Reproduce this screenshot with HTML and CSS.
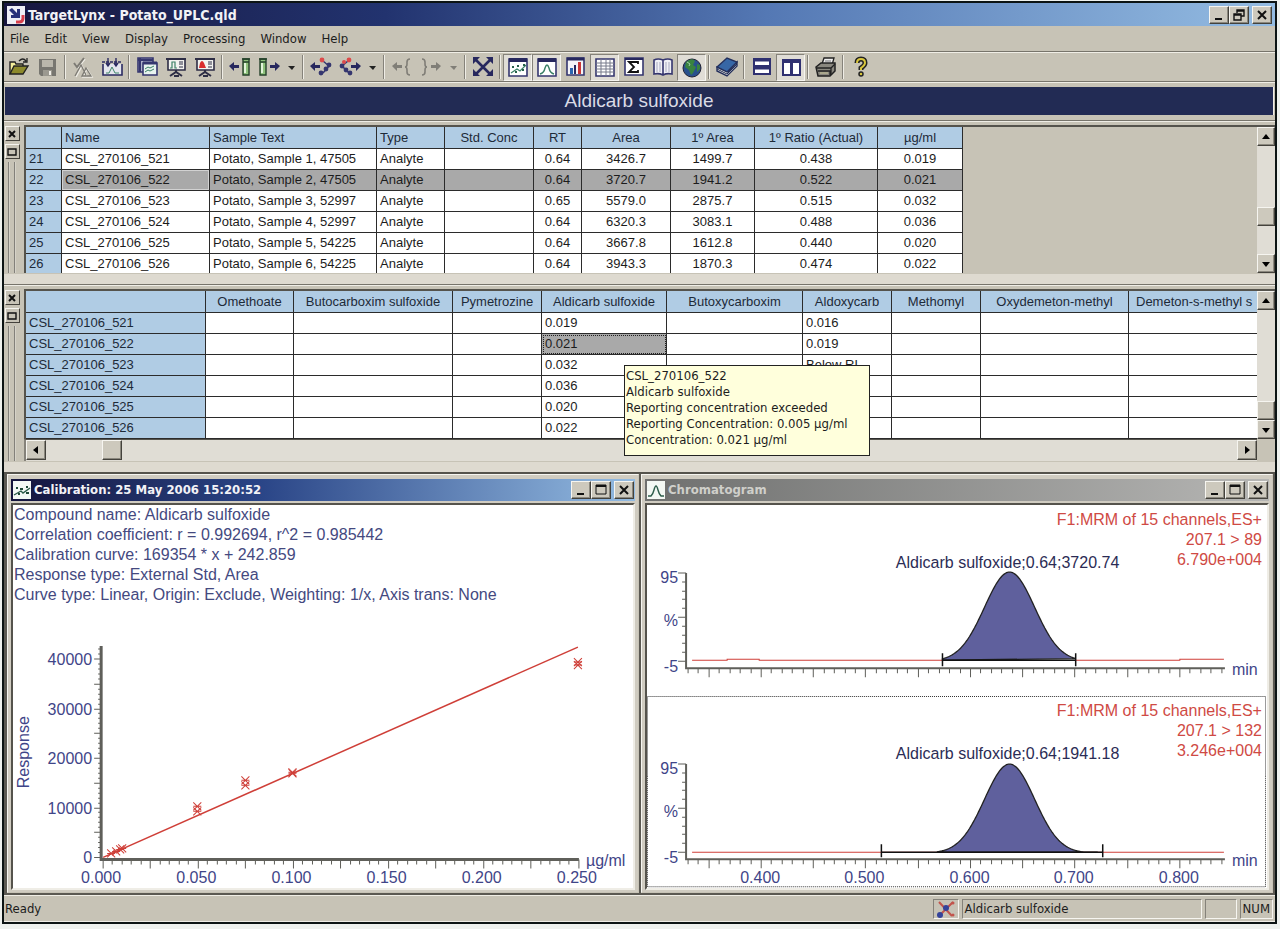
FILE: index.html
```html
<!DOCTYPE html>
<html lang="en">
<head>
  <meta charset="UTF-8" />
  <meta name="viewport" content="width=device-width, initial-scale=1.0"/>
  <title>TargetLynx - Potato_UPLC.qld</title>
  <link rel="stylesheet" href="styles.css">
</head>

<body>
  <div class="app">
    <header class="titlebar">
      <svg class="app-icon" viewBox="0 0 18 18"><rect width="18" height="18" fill="#eef0f6"/><path d="M2 4l3-2 5 5V3h3v9H4V9h3z" fill="#27327a"/><path d="M16 9v3q0 4-4 4H9" fill="none" stroke="#d8404c" stroke-width="3"/></svg>
      <h1>TargetLynx - Potato_UPLC.qld</h1>
      <div class="win-buttons">
        <button aria-label="Minimize"><svg viewBox="0 0 12 12"><path d="M2 10h7" stroke="#111" stroke-width="2"/></svg></button>
        <button aria-label="Restore"><svg viewBox="0 0 12 12" fill="none" stroke="#111"><path d="M4 4V1h7v6H8M4 2h7M1 5h7v6H1zM1 6h7" stroke-width="1.4"/></svg></button>
        <button class="close" aria-label="Close"><svg viewBox="0 0 12 12"><path d="M2 2l8 8M10 2l-8 8" stroke="#111" stroke-width="2"/></svg></button>
      </div>
    </header>

    <nav class="menubar">
      <button>File</button>
      <button>Edit</button>
      <button>View</button>
      <button>Display</button>
      <button>Processing</button>
      <button>Window</button>
      <button>Help</button>
    </nav>

    <div class="toolbar">
      <button aria-label="Open"><svg viewBox="0 0 22 22"><path d="M2 18V6h5l1 2h7v3" fill="#f4ee9a" stroke="#222" stroke-width="1.4"/><path d="M2 18l4-8h14l-5 8z" fill="#8d8a2c" stroke="#222" stroke-width="1.4"/><path d="M11 5q4-4 7 0M19 2v4h-4" fill="none" stroke="#222" stroke-width="1.3"/></svg></button>
      <button aria-label="Save"><svg viewBox="0 0 22 22"><path d="M2 3h17v17H4l-2-2z" fill="#777670"/><path d="M5 4h11v7H5z" fill="#b9b6ab"/><path d="M6 14h9v6H6z" fill="#9b9990"/><path d="M12 15h2v4h-2z" fill="#f0eee8"/></svg></button>
      <span class="sep"></span>
      <button aria-label="Process"><svg viewBox="0 0 22 22" fill="none"><path d="M2 7l3 4 7-9M3 20L9 9l5 10M10 20l4-8 5 8z" stroke="#efede6" stroke-width="1.5" transform="translate(1 1)"/><path d="M2 7l3 4 7-9" stroke="#7d7b74" stroke-width="2"/><path d="M3 20L9 9l5 10M10 20l4-8 5 8z" stroke="#7d7b74" stroke-width="1.3"/></svg></button>
      <button aria-label="Integrate"><svg viewBox="0 0 22 22" fill="none" stroke="#2b2b62"><path d="M2 8v11h19V8" fill="#e4e6ee" stroke-width="1.6"/><path d="M1 6h20" stroke-width="1.4" stroke-dasharray="3 1"/><path d="M7 2v7M15 2v7M5 7l2 3 2-3M13 7l2 3 2-3" stroke-width="1.4"/><path d="M5 17h3l3-6 3 6h4" stroke="#41876a"/></svg></button>
      <span class="sep"></span>
      <button aria-label="Layouts"><svg viewBox="0 0 22 22" fill="none" stroke="#35366f" stroke-width="1.6"><path d="M2 2h15v14H2z" fill="#aeb1ca"/><path d="M2 4h15M4 2v14" stroke-width="2"/><path d="M7 7h14v12H7z" fill="#e8f3ef"/><path d="M7 7h14" stroke-width="3"/><path d="M9 13l3-2 2 1 4-2M9 16l3-2 2 1 4-2" stroke="#3a8066" stroke-width="1"/></svg></button>
      <button aria-label="Method display"><svg viewBox="0 0 22 22" fill="none" stroke="#2d2d45" stroke-width="1.6"><path d="M3 3h17v11H3z" fill="#f2f3ef"/><path d="M1 3h20M11 14v3M5 20l6-4 6 4M9 20h5" stroke-width="2"/><path d="M5 12h2V6h3v6h2" stroke="#3c8266" stroke-width="1.2"/><path d="M14 6h4M14 8h4M14 11h4" stroke-width="1"/></svg></button>
      <button aria-label="Alarm display"><svg viewBox="0 0 22 22" fill="none" stroke="#2d2d45" stroke-width="1.6"><path d="M3 3h17v11H3z" fill="#f2f3ef"/><path d="M1 3h20M11 14v3M5 20l6-4 6 4M9 20h5" stroke-width="2"/><path d="M5 12l1-5q2-4 4 0l2 5z" fill="#d92d2d" stroke="none"/><path d="M14 6h4M14 8h4M14 11h4" stroke-width="1"/></svg></button>
      <span class="sep"></span>
      <button aria-label="Previous sample"><svg viewBox="0 0 22 22"><path d="M0 10l5-4v3h5v3H5v3z" fill="#27285e"/><path d="M14 3h6v16h-6z" fill="#8ec27c" stroke="#24422a" stroke-width="1.4"/><path d="M13 3h8M14 6h6" stroke="#24422a" stroke-width="1.6"/><path d="M16 7v10" stroke="#e2f4da" stroke-width="2"/></svg></button>
      <button aria-label="Next sample"><svg viewBox="0 0 22 22"><path d="M22 10l-5-4v3h-5v3h5v3z" fill="#27285e"/><path d="M2 3h6v16H2z" fill="#8ec27c" stroke="#24422a" stroke-width="1.4"/><path d="M1 3h8M2 6h6" stroke="#24422a" stroke-width="1.6"/><path d="M4 7v10" stroke="#e2f4da" stroke-width="2"/></svg></button>
      <button class="drop" aria-label="Samples"><svg viewBox="0 0 8 22"><path d="M0 10h7l-3 4z" fill="#222"/></svg></button>
      <span class="sep"></span>
      <button aria-label="Previous compound"><svg viewBox="0 0 22 22"><path d="M0 10l5-4v3h5v3H5v3z" fill="#27285e"/><path d="M13 5l6 5-6 7" fill="none" stroke="#35366f" stroke-width="1.5"/><circle cx="12" cy="4" r="2.4" fill="#dc4a4a"/><circle cx="19" cy="9" r="2.4" fill="#35366f"/><circle cx="16" cy="13" r="2.4" fill="#35366f"/><circle cx="11" cy="17" r="2.4" fill="#35366f"/></svg></button>
      <button aria-label="Next compound"><svg viewBox="0 0 22 22"><path d="M22 10l-5-4v3h-5v3h5v3z" fill="#27285e"/><path d="M9 5l-6 5 7 7" fill="none" stroke="#35366f" stroke-width="1.5"/><circle cx="10" cy="4" r="2.4" fill="#dc4a4a"/><circle cx="5" cy="6" r="2" fill="#dc4a4a"/><circle cx="3" cy="10" r="2.4" fill="#35366f"/><circle cx="7" cy="14" r="2.4" fill="#35366f"/><circle cx="11" cy="17" r="2.4" fill="#35366f"/></svg></button>
      <button class="drop" aria-label="Compounds"><svg viewBox="0 0 8 22"><path d="M0 10h7l-3 4z" fill="#222"/></svg></button>
      <span class="sep"></span>
      <button disabled aria-label="Previous group"><svg viewBox="0 0 22 22"><path d="M1 10l5-4v3h5v3H6v3z" fill="#807e77"/><path d="M19 3q-3 0-3 3v2q0 3-2 3 2 0 2 3v2q0 3 3 3" fill="none" stroke="#807e77" stroke-width="1.6"/></svg></button>
      <button disabled aria-label="Next group"><svg viewBox="0 0 22 22"><path d="M21 10l-5-4v3h-5v3h5v3z" fill="#807e77"/><path d="M2 3q3 0 3 3v2q0 3 2 3-2 0-2 3v2q0 3-3 3" fill="none" stroke="#807e77" stroke-width="1.6"/></svg></button>
      <button class="drop" disabled aria-label="Groups"><svg viewBox="0 0 8 22"><path d="M0 10h7l-3 4z" fill="#807e77"/></svg></button>
      <span class="sep"></span>
      <button aria-label="Zoom to fit"><svg viewBox="0 0 22 22"><path d="M4 4l14 14M18 4L4 18" stroke="#27285e" stroke-width="2.6"/><path d="M1 1h7L1 8zM21 1h-7l7 7zM1 20h7l-7-7zM21 20h-7l7-7z" fill="#27285e"/></svg></button>
      <span class="sep"></span>
      <button class="on" aria-label="Calibration"><svg viewBox="0 0 22 22"><path d="M2 3h18v17H2z" fill="#fff" stroke="#35366f" stroke-width="1.6"/><path d="M2 4h18" stroke="#27285e" stroke-width="4"/><path d="M4 17l6-4 3 2 6-6" fill="none" stroke="#3a8066" stroke-width="1.2"/><path d="M5 10h2v2H5zM10 9h2v2h-2zM15 13h2v2h-2zM8 15h2v2H8zM16 8h2v2h-2z" fill="#27604a"/></svg></button>
      <button class="on" aria-label="Chromatogram"><svg viewBox="0 0 22 22"><path d="M2 3h18v17H2z" fill="#fff" stroke="#35366f" stroke-width="1.6"/><path d="M2 4h18" stroke="#27285e" stroke-width="4"/><path d="M4 18q4-1 5-6 2-6 4 0 1 5 5 6" fill="none" stroke="#3a8066" stroke-width="1.4"/></svg></button>
      <button aria-label="Spectrum"><svg viewBox="0 0 22 22"><path d="M2 2h17v17H2z" fill="#f4f4f8" stroke="#35366f" stroke-width="1.6"/><path d="M2 3h17" stroke="#27285e" stroke-width="3"/><path d="M5 12h3v6H5z" fill="#2b66b0"/><path d="M9 9h2v9H9z" fill="#27285e"/><path d="M13 6h3v12h-3z" fill="#c93636"/></svg></button>
      <button class="on" aria-label="Results table"><svg viewBox="0 0 22 22"><path d="M2 3h18v17H2z" fill="#fff" stroke="#35366f" stroke-width="1.6"/><path d="M2 7h18M2 10h18M2 13h18M2 16h18M7 3v17M12 3v17M16 3v17" stroke="#777b8a"/></svg></button>
      <button aria-label="Summary"><svg viewBox="0 0 22 22"><path d="M2 2h18v17H2z" fill="#fff" stroke="#35366f" stroke-width="1.6"/><path d="M2 3h18" stroke="#27285e" stroke-width="2"/><path d="M15 8V6H6l5 5-5 5h9v-2" fill="none" stroke="#111" stroke-width="1.8"/></svg></button>
      <button aria-label="Audit"><svg viewBox="0 0 22 22"><path d="M2 4q4-2 9 0 5-2 9 0v14q-5-1-9 1-4-2-9-1zM11 4v15" fill="#f1f1f6" stroke="#35366f" stroke-width="1.6"/><path d="M5 6v10M8 6v10M14 6v10M17 6v10" stroke="#a7a9c0"/></svg></button>
      <button class="on" aria-label="Globe"><svg viewBox="0 0 22 22"><circle cx="11" cy="12" r="9" fill="#28508c" stroke="#223"/><path d="M5 6q6-5 9-1l-2 4 3 2-3 6-2 2-2-5-4-3zM16 8l3 1v4l-3 3z" fill="#39833f"/><path d="M6 6l3 2-1 2" fill="none" stroke="#a5cfa8"/></svg></button>
      <span class="sep"></span>
      <button aria-label="Library"><svg viewBox="0 0 22 22"><path d="M1 11v4l10 5 10-10V6l-9 10z" fill="#e7e5dc" stroke="#24305c" stroke-width="1.4"/><path d="M1 11L11 2l10 4-10 10z" fill="#3767a6" stroke="#24305c" stroke-width="1.4"/><path d="M1 13l10 5 10-10" fill="none" stroke="#24305c"/></svg></button>
      <span class="sep"></span>
      <button aria-label="Tile horizontally"><svg viewBox="0 0 22 22" fill="#fff" stroke="#2f3070" stroke-width="2"><path d="M3 3h16v7H3zM3 11h16v7H3z"/><path d="M3 4h16M3 12h16" stroke-width="3"/></svg></button>
      <button class="on" aria-label="Tile vertically"><svg viewBox="0 0 22 22" fill="#fff" stroke="#2f3070" stroke-width="2"><path d="M3 4h8v15H3zM12 4h8v15h-8z"/><path d="M2 5h19" stroke-width="4"/></svg></button>
      <span class="sep"></span>
      <button aria-label="Print"><svg viewBox="0 0 22 22"><path d="M7 8l2-6h10l-2 7z" fill="#eee" stroke="#222" stroke-width="1.3"/><path d="M1 11l5-4h14v8l-5 5H3z" fill="#8a887f" stroke="#222" stroke-width="1.5"/><path d="M2 12h14l4-4M3 15h12v4M16 12v7" fill="none" stroke="#222" stroke-width="1.3"/><path d="M10 5h6" stroke="#777"/><path d="M5 17h8" stroke="#c9c69a"/></svg></button>
      <span class="sep"></span>
      <button aria-label="Help"><svg viewBox="0 0 22 22"><path d="M7 7q0-4 4-4t4 4q0 2-4 5v2" fill="none" stroke="#222" stroke-width="5"/><path d="M7 7q0-4 4-4t4 4q0 2-4 5v2" fill="none" stroke="#d9c63c" stroke-width="2"/><circle cx="11" cy="18" r="2" fill="#d9c63c" stroke="#222" stroke-width="1.5"/></svg></button>
    </div>

    <div class="banner-wrap"><h2 class="banner">Aldicarb sulfoxide</h2></div>

    <section class="dock">
      <div class="gripper">
        <button aria-label="Close results"><svg viewBox="0 0 10 10"><path d="M2 2l6 6M8 2L2 8" stroke="#111" stroke-width="2"/></svg></button>
        <button aria-label="Expand results"><svg viewBox="0 0 10 10"><path d="M1 2h8v6H1z" fill="none" stroke="#111" stroke-width="1.4"/></svg></button>
        <div class="grip"></div>
      </div>
      <div class="pane">
        <div class="sheet results-sheet">
          <table class="grid results">
            <colgroup><col class="w36"><col class="w148"><col class="w167"><col class="w68"><col class="w89"><col class="w48"><col class="w89"><col class="w84"><col class="w123"><col class="w85"></colgroup>
            <thead>
              <tr><th></th><th class="left">Name</th><th class="left">Sample Text</th><th class="left">Type</th><th>Std. Conc</th><th>RT</th><th>Area</th><th>1º Area</th><th>1º Ratio (Actual)</th><th>µg/ml</th></tr>
            </thead>
            <tbody>
              <tr><th>21</th><td>CSL_270106_521</td><td>Potato, Sample 1, 47505</td><td>Analyte</td><td></td><td>0.64</td><td>3426.7</td><td>1499.7</td><td>0.438</td><td>0.019</td></tr>
              <tr class="selected"><th>22</th><td>CSL_270106_522</td><td>Potato, Sample 2, 47505</td><td>Analyte</td><td></td><td>0.64</td><td>3720.7</td><td>1941.2</td><td>0.522</td><td>0.021</td></tr>
              <tr><th>23</th><td>CSL_270106_523</td><td>Potato, Sample 3, 52997</td><td>Analyte</td><td></td><td>0.65</td><td>5579.0</td><td>2875.7</td><td>0.515</td><td>0.032</td></tr>
              <tr><th>24</th><td>CSL_270106_524</td><td>Potato, Sample 4, 52997</td><td>Analyte</td><td></td><td>0.64</td><td>6320.3</td><td>3083.1</td><td>0.488</td><td>0.036</td></tr>
              <tr><th>25</th><td>CSL_270106_525</td><td>Potato, Sample 5, 54225</td><td>Analyte</td><td></td><td>0.64</td><td>3667.8</td><td>1612.8</td><td>0.440</td><td>0.020</td></tr>
              <tr><th>26</th><td>CSL_270106_526</td><td>Potato, Sample 6, 54225</td><td>Analyte</td><td></td><td>0.64</td><td>3943.3</td><td>1870.3</td><td>0.474</td><td>0.022</td></tr>
            </tbody>
          </table>
        </div>
        <div class="vscroll">
          <button aria-label="Scroll up"><svg viewBox="0 0 10 10"><path d="M5 2l4 5H1z"/></svg></button>
          <span class="track"></span>
          <span class="thumb"></span>
          <span class="track end"></span>
          <button aria-label="Scroll down"><svg viewBox="0 0 10 10"><path d="M5 8l4-5H1z"/></svg></button>
        </div>
      </div>
    </section>

    <section class="dock">
      <div class="gripper">
        <button aria-label="Close summary"><svg viewBox="0 0 10 10"><path d="M2 2l6 6M8 2L2 8" stroke="#111" stroke-width="2"/></svg></button>
        <button aria-label="Expand summary"><svg viewBox="0 0 10 10"><path d="M1 2h8v6H1z" fill="none" stroke="#111" stroke-width="1.4"/></svg></button>
        <div class="grip"></div>
      </div>
      <div class="pane-stack">
        <div class="pane">
          <div class="sheet">
            <table class="grid summary">
              <colgroup><col class="w180"><col class="w88"><col class="w159"><col class="w89"><col class="w125"><col class="w136"><col class="w89"><col class="w89"><col class="w148"><col class="w148"></colgroup>
              <thead>
                <tr><th></th><th>Omethoate</th><th>Butocarboxim sulfoxide</th><th>Pymetrozine</th><th>Aldicarb sulfoxide</th><th>Butoxycarboxim</th><th>Aldoxycarb</th><th>Methomyl</th><th>Oxydemeton-methyl</th><th class="left">Demeton-s-methyl s</th></tr>
              </thead>
              <tbody>
                <tr><th>CSL_270106_521</th><td></td><td></td><td></td><td>0.019</td><td></td><td>0.016</td><td></td><td></td><td></td></tr>
                <tr><th>CSL_270106_522</th><td></td><td></td><td></td><td class="current">0.021</td><td></td><td>0.019</td><td></td><td></td><td></td></tr>
                <tr><th>CSL_270106_523</th><td></td><td></td><td></td><td>0.032</td><td></td><td>Below RL</td><td></td><td></td><td></td></tr>
                <tr><th>CSL_270106_524</th><td></td><td></td><td></td><td>0.036</td><td></td><td></td><td></td><td></td><td></td></tr>
                <tr><th>CSL_270106_525</th><td></td><td></td><td></td><td>0.020</td><td></td><td></td><td></td><td></td><td></td></tr>
                <tr><th>CSL_270106_526</th><td></td><td></td><td></td><td>0.022</td><td></td><td></td><td></td><td></td><td></td></tr>
              </tbody>
            </table>
          </div>
          <div class="vscroll">
            <button aria-label="Scroll up"><svg viewBox="0 0 10 10"><path d="M5 2l4 5H1z"/></svg></button>
            <span class="track"></span>
            <span class="thumb"></span>
            <button aria-label="Scroll down"><svg viewBox="0 0 10 10"><path d="M5 8l4-5H1z"/></svg></button>
          </div>
        </div>
        <div class="hscroll">
          <button aria-label="Scroll left"><svg viewBox="0 0 10 10"><path d="M2 5l5-4v8z"/></svg></button>
          <span class="track start"></span>
          <span class="thumb"></span>
          <span class="track"></span>
          <button aria-label="Scroll right"><svg viewBox="0 0 10 10"><path d="M8 5L3 1v8z"/></svg></button>
        </div>
        <div class="tooltip" role="tooltip">
          CSL_270106_522<br />
          Aldicarb sulfoxide<br />
          Reporting concentration exceeded<br />
          Reporting Concentration: 0.005 µg/ml<br />
          Concentration: 0.021 µg/ml
        </div>
      </div>
    </section>

    <main class="mdi">
      <section class="child">
        <div class="child-title active">
          <svg class="child-icon" viewBox="0 0 18 18"><rect width="18" height="18" fill="#f3f8f4"/><path d="M1 14l7-4 2 2 7-5" fill="none" stroke="#2c5c4a" stroke-width="1.4"/><path d="M3 6h2v2H3zM7 7h3v2H7zM13 5h2v2h-2zM5 12h2v2H5zM13 11h3v2h-3z" fill="#1f4938"/></svg>
          <h3>Calibration: 25 May 2006 15:20:52</h3>
          <div class="win-buttons">
            <button aria-label="Minimize"><svg viewBox="0 0 12 12"><path d="M2 10h7" stroke="#111" stroke-width="2"/></svg></button>
            <button aria-label="Maximize"><svg viewBox="0 0 12 12" fill="none" stroke="#111"><path d="M1 1h10v9H1z"/><path d="M1 2h10" stroke-width="2"/></svg></button>
            <button class="close" aria-label="Close"><svg viewBox="0 0 12 12"><path d="M2 2l8 8M10 2l-8 8" stroke="#111" stroke-width="2"/></svg></button>
          </div>
        </div>
        <div class="client">
          <p class="fit-info">
            Compound name: Aldicarb sulfoxide<br />
            Correlation coefficient: r = 0.992694, r^2 = 0.985442<br />
            Calibration curve: 169354 * x + 242.859<br />
            Response type: External Std, Area<br />
            Curve type: Linear, Origin: Exclude, Weighting: 1/x, Axis trans: None
          </p>
          <svg class="plot" id="calibration" viewBox="0 0 619 283"></svg>
        </div>
      </section>

      <section class="child">
        <div class="child-title">
          <svg class="child-icon" viewBox="0 0 18 18"><rect width="18" height="18" fill="#f3f8f4"/><path d="M1 15h3q2-2 3-6 2-8 4 0 1 4 3 6h3" fill="none" stroke="#2c5c4a" stroke-width="1.4"/></svg>
          <h3>Chromatogram</h3>
          <div class="win-buttons">
            <button aria-label="Minimize"><svg viewBox="0 0 12 12"><path d="M2 10h7" stroke="#111" stroke-width="2"/></svg></button>
            <button aria-label="Maximize"><svg viewBox="0 0 12 12" fill="none" stroke="#111"><path d="M1 1h10v9H1z"/><path d="M1 2h10" stroke-width="2"/></svg></button>
            <button class="close" aria-label="Close"><svg viewBox="0 0 12 12"><path d="M2 2l8 8M10 2l-8 8" stroke="#111" stroke-width="2"/></svg></button>
          </div>
        </div>
        <div class="client">
          <svg class="plot" id="trace89" viewBox="0 0 619 191"></svg>
          <svg class="plot" id="trace132" viewBox="0 0 619 191"></svg>
        </div>
      </section>
    </main>

    <footer class="statusbar">
      <span class="ready">Ready</span>
      <span class="cell"><svg viewBox="0 0 20 18"><path d="M3 2l13 14M17 2L4 15" stroke="#c2544c" stroke-width="2"/><circle cx="10" cy="8" r="3" fill="#34439a"/><circle cx="4" cy="15" r="3" fill="#34439a"/><circle cx="17" cy="3" r="1.5" fill="#c2544c"/><circle cx="17" cy="15" r="1.5" fill="#c2544c"/></svg></span>
      <span class="cell compound">Aldicarb sulfoxide</span>
      <span class="cell blank"></span>
      <span class="cell">NUM</span>
    </footer>
  </div>

  <script src="script.js"></script>
</body>
</html>
```
FILE: styles.css
```css
body {
  font-family: "DejaVu Sans Condensed", "Noto Sans", sans-serif;
  font-size: 13px;
  color: #1c1c1c;
  background-color: #eef1ee;
  margin: 0;
  padding: 1px 3px 3px 2px;
}

button {
  font: inherit;
  color: inherit;
  background: none;
  border: none;
  margin: 0;
  padding: 0;
}

svg {
  display: block;
}

h1, h2, h3, p {
  margin: 0;
}

.app {
  border: 2px solid #0c1414;
  background-color: #c7c3b6;
}

/* title bars */
.titlebar {
  display: flex;
  align-items: center;
  gap: 3px;
  height: 23px;
  padding: 0 3px;
  background: linear-gradient(to right, #17173f, #22336f 30%, #5478b4 60%, #94bce2);
}

.titlebar h1,
.child-title h3 {
  flex: 1;
  font-size: 13px;
  line-height: 20px;
  font-weight: bold;
  color: #f2f2f6;
}

.titlebar h1 {
  font-size: 14px;
}

.app-icon,
.child-icon {
  width: 18px;
  height: 18px;
}

.win-buttons {
  display: flex;
}

.win-buttons button {
  display: flex;
  align-items: center;
  justify-content: center;
  width: 20px;
  height: 18px;
  box-sizing: border-box;
  background-color: #cdc9bd;
  border: 1px solid;
  border-color: #f6f5f0 #44423c #44423c #f6f5f0;
  box-shadow: inset -1px -1px #8b887e;
}

.win-buttons svg {
  width: 12px;
  height: 12px;
}

.win-buttons .close {
  margin-left: 3px;
}

/* menu and toolbar */
.menubar {
  display: flex;
  gap: 15px;
  height: 25px;
  padding-left: 6px;
  border-bottom: 1px solid #77746b;
}

.toolbar {
  display: flex;
  align-items: center;
  height: 28px;
  border-top: 1px solid #f0eee6;
  border-bottom: 1px solid #77746b;
}

.toolbar button {
  display: flex;
  align-items: center;
  justify-content: center;
  width: 29px;
  height: 27px;
  box-sizing: border-box;
}

.toolbar svg {
  width: 22px;
  height: 22px;
}

.toolbar .drop {
  width: 17px;
}

.toolbar .drop svg {
  width: 8px;
}

.toolbar .on {
  background-color: #e0ddd6;
  border: 1px solid;
  border-color: #85827a #f6f5f0 #f6f5f0 #85827a;
}

.sep {
  width: 2px;
  height: 24px;
  margin: 0 2px;
  background: linear-gradient(to right, #85827a 50%, #efede6 50%);
}

.banner-wrap {
  padding: 4px 1px 5px;
  border-top: 1px solid #f0eee6;
}

.banner {
  font-family: "Liberation Sans", Arial, sans-serif;
  font-size: 19px;
  line-height: 28px;
  font-weight: normal;
  text-align: center;
  color: #dadbe6;
  background-color: #222b54;
  border-right: 1px solid #f0eee6;
}

/* docked tables */
.dock {
  display: flex;
  padding: 4px 0 11px;
  border-top: 1px solid #77746b;
  box-shadow: inset 0 1px #efede6, inset 0 -10px #dedad0;
}

.gripper {
  display: flex;
  flex-direction: column;
  align-items: center;
  gap: 3px;
  width: 16px;
  padding: 1px 4px 0 0;
}

.gripper button {
  display: flex;
  align-items: center;
  justify-content: center;
  width: 15px;
  height: 15px;
  box-sizing: border-box;
  border: 1px solid;
  border-color: #f6f5f0 #44423c #44423c #f6f5f0;
}

.gripper svg {
  width: 10px;
  height: 10px;
}

.grip {
  flex: 1;
  width: 8px;
  box-sizing: border-box;
  border-left: 2px groove #d6d3c9;
  border-right: 2px groove #d6d3c9;
}

.pane-stack {
  position: relative;
  flex: 1;
  min-width: 0;
}

.pane {
  display: flex;
  flex: 1;
  min-width: 0;
  border-top: 2px solid #55534c;
}

.sheet {
  flex: 1;
  min-width: 0;
  overflow: hidden;
  border-left: 2px solid #55534c;
}

.results-sheet {
  height: 146px;
}

.grid {
  font-family: "Liberation Sans", Arial, sans-serif;
  table-layout: fixed;
  width: 0;
  border-spacing: 0;
}

.grid th,
.grid td {
  height: 21px;
  box-sizing: border-box;
  padding: 0 3px;
  font-weight: normal;
  line-height: 18px;
  text-align: left;
  white-space: nowrap;
  border-right: 1px solid #2b2b2b;
  border-bottom: 1px solid #2b2b2b;
  background-color: #fff;
}

.grid th {
  background-color: #b0cce4;
  color: #1d2a38;
}

.grid thead th {
  height: 22px;
  padding-top: 1px;
  text-align: center;
}

.grid thead .left {
  text-align: left;
}

.grid td:nth-child(n+6) {
  text-align: center;
}

.summary tbody td:nth-child(n) {
  text-align: left;
}

.grid .selected td {
  background-color: #a9a9a9;
}

.grid .selected td:nth-child(2) {
  box-shadow: inset 0 0 0 1px #d2d2d2;
}

.grid .current {
  background-color: #a9a9a9;
  outline: 1px dotted #222;
  outline-offset: -2px;
}

.summary thead .left {
  padding-left: 7px;
}

.w36 { width: 36px; }
.w48 { width: 48px; }
.w68 { width: 68px; }
.w84 { width: 84px; }
.w85 { width: 85px; }
.w88 { width: 88px; }
.w89 { width: 89px; }
.w123 { width: 123px; }
.w125 { width: 125px; }
.w136 { width: 136px; }
.w148 { width: 148px; }
.w159 { width: 159px; }
.w167 { width: 167px; }
.w180 { width: 180px; }

/* scroll bars */
.vscroll,
.hscroll {
  display: flex;
  background-color: #e0ddd5;
}

.vscroll {
  flex-direction: column;
  width: 18px;
}

.hscroll {
  height: 21px;
  margin-right: 18px;
  border-top: 1px solid #55534c;
  border-left: 2px solid #85827a;
}

.vscroll button,
.hscroll button,
.thumb {
  display: flex;
  align-items: center;
  justify-content: center;
  width: 18px;
  height: 19px;
  box-sizing: border-box;
  background-color: #cdc9bd;
  border: 1px solid;
  border-color: #f6f5f0 #44423c #44423c #f6f5f0;
  box-shadow: inset -1px -1px #8b887e;
}

.hscroll button,
.hscroll .thumb {
  width: 20px;
  height: 20px;
}

.vscroll svg,
.hscroll svg {
  width: 10px;
  height: 10px;
}

.track {
  flex: 1;
}

.track.end {
  flex: 0 0 28px;
}

.track.start {
  flex: 0 0 56px;
}

.tooltip {
  position: absolute;
  left: 600px;
  top: 76px;
  width: 242px;
  padding: 2px 1px 7px;
  font-size: 13px;
  line-height: 16px;
  white-space: nowrap;
  background-color: #ffffdc;
  border: 1px solid #222;
}

/* child windows */
.mdi {
  display: grid;
  grid-template-columns: 1fr 1fr;
  gap: 2px;
  padding: 0 2px 2px 3px;
  background-color: #5b5952;
  border-top: 2px solid #55534c;
}

.child {
  padding: 4px 3px 2px;
  background-color: #d0ccc1;
  border: 1px solid;
  border-color: #f6f5f0 #c7c3b6 #c7c3b6 #f6f5f0;
}

.child-title {
  display: flex;
  align-items: center;
  gap: 3px;
  height: 22px;
  padding: 0 1px 0 2px;
  background: linear-gradient(to right, #6f706f, #b6b6b4);
}

.child-title h3 {
  color: #cfcfca;
}

.child-title.active {
  background: linear-gradient(to right, #15153c, #2a4587 40%, #94bce2);
}

.child-title.active h3 {
  color: #f2f2f6;
}

.client {
  margin-top: 2px;
  background-color: #fff;
  border: 2px solid;
  border-color: #55534c #efede6 #efede6 #55534c;
}

.fit-info {
  padding-left: 1px;
  font-family: "Liberation Sans", Arial, sans-serif;
  font-size: 16px;
  line-height: 20px;
  color: #44497f;
  white-space: nowrap;
}

.plot {
  width: 100%;
  height: auto;
}

.plot text {
  font-family: "Liberation Sans", Arial, sans-serif;
  font-size: 16px;
  fill: #3f4588;
}

.plot .peak-label {
  fill: #2b2c55;
}

.plot .channel {
  fill: #cf4a44;
}

/* status bar */
.statusbar {
  display: flex;
  align-items: center;
  gap: 3px;
  height: 25px;
  padding: 0 2px 0 1px;
  border-top: 1px solid #f0eee6;
  border-bottom: 1px solid #efede6;
}

.ready {
  flex: 1;
}

.cell {
  height: 20px;
  line-height: 18px;
  padding: 0 2px;
  box-sizing: border-box;
  border: 1px solid;
  border-color: #85827a #f6f5f0 #f6f5f0 #85827a;
}

.cell svg {
  width: 20px;
  height: 18px;
}

.compound {
  width: 240px;
}

.blank {
  width: 32px;
}
```
FILE: script.js
```js
const AXIS = "#5f5f5a";
const RED = "#cf3f38";

function add(svg, name, attrs, text) {
  const el = document.createElementNS("http://www.w3.org/2000/svg", name);
  for (const key in attrs) el.setAttribute(key, attrs[key]);
  if (text) el.textContent = text;
  svg.appendChild(el);
}

function line(svg, d, color, width) {
  add(svg, "path", { d: d, stroke: color, "stroke-width": width, fill: "none" });
}

function label(svg, x, y, anchor, text, cls) {
  add(svg, "text", { x: x, y: y, "text-anchor": anchor, class: cls || "" }, text);
}

function drawCalibration() {
  const svg = document.getElementById("calibration");
  const px = v => 90 + v * 1898;
  const py = v => 252 - v * 0.00495;

  let ticks = "";
  for (let i = 0; i <= 42; i++) {
    const len = i % 5 === 0 ? 7 : 3;
    ticks += `M88 ${Math.round(py(i * 1000))}h-${len}`;
  }
  for (let i = 0; i <= 50; i++) {
    const len = i % 5 === 0 ? 9 : 5;
    ticks += `M${Math.round(px(i * 0.005))} 254v${len}`;
  }
  line(svg, ticks, AXIS, 1);
  line(svg, "M88 41V254H565", AXIS, 3);

  [0, 10000, 20000, 30000, 40000].forEach(v => label(svg, 79, Math.round(py(v)) + 6, "end", String(v)));
  [0, 0.05, 0.1, 0.15, 0.2, 0.25].forEach(v => label(svg, Math.round(px(v)) - 2, 278, "middle", v.toFixed(3)));
  label(svg, 572, 261, "start", "µg/ml");
  add(svg, "text", { transform: "translate(16 147) rotate(-90)", "text-anchor": "middle" }, "Response");

  line(svg, "M90 252L564 42", RED, 1.5);
  const points = [[98, 248], [103, 246], [107, 244], [109, 243], [184, 201], [184, 206],
    [232, 175], [232, 180], [279, 167], [279, 168], [564, 57], [564, 60]];
  points.forEach(([x, y]) => line(svg, `M${x - 4} ${y - 4}l8 8M${x + 4} ${y - 4}l-8 8M${x - 4} ${y}h8`, RED, 1));
}

function drawTrace(id, opt) {
  const svg = document.getElementById(id);
  const px = v => 114 + (v - 0.4) * 1045;

  let ticks = "";
  for (let i = 0; i <= 10; i++) {
    ticks += `M39 ${68 + Math.round(i * 8.8)}h-${i % 5 === 0 ? 8 : 4}`;
  }
  for (let i = 33; i <= 84; i++) {
    ticks += `M${Math.round(px(i / 100))} 163v${i % 5 === 0 ? 9 : 5}`;
  }
  line(svg, ticks, AXIS, 1);
  line(svg, "M39 68V163H577", AXIS, 2);
  label(svg, 31, 78, "end", "95");
  label(svg, 31, 121, "end", "%");
  label(svg, 31, 167, "end", "-5");
  label(svg, 584, 170, "start", "min");

  line(svg, opt.trace, RED, 1);
  let d = `M${opt.start} ${opt.base}`;
  for (let x = opt.start; x <= opt.end; x++) {
    const y = opt.base + 1 - 89 * Math.exp(-Math.pow((x - 362) / 25, 2) / 2);
    d += `L${x} ${Math.min(y, opt.base).toFixed(1)}`;
  }
  add(svg, "path", { d: d + "z", fill: "#5f609d", stroke: "#222", "stroke-width": 1.3 });
  line(svg, `M${opt.left} ${opt.base}H${opt.right}M${opt.left} 148v13M${opt.right} 148v13`, "#111", 1.5);

  label(svg, 360, 63, "middle", opt.peak, "peak-label");
  opt.channel.forEach((t, i) => label(svg, 614, 20 + i * 20, "end", t, "channel"));

  if (opt.labels) {
    [0.4, 0.5, 0.6, 0.7, 0.8].forEach(v => label(svg, Math.round(px(v)) - 1, 187, "middle", v.toFixed(3)));
    add(svg, "rect", { x: 0.5, y: 0.5, width: 617, height: 190, fill: "none", stroke: "#333", "stroke-dasharray": "1 1" });
  }
}

drawCalibration();

drawTrace("trace89", {
  trace: "M45 155H80V154H112V155H295M428 155H532V154H576",
  start: 295, end: 428, left: 295, right: 428, base: 155,
  peak: "Aldicarb sulfoxide;0.64;3720.74",
  channel: ["F1:MRM of 15 channels,ES+", "207.1 > 89", "6.790e+004"]
});

drawTrace("trace132", {
  trace: "M45 156H576",
  start: 290, end: 450, left: 234, right: 455, base: 156,
  peak: "Aldicarb sulfoxide;0.64;1941.18",
  channel: ["F1:MRM of 15 channels,ES+", "207.1 > 132", "3.246e+004"],
  labels: true
});
```
